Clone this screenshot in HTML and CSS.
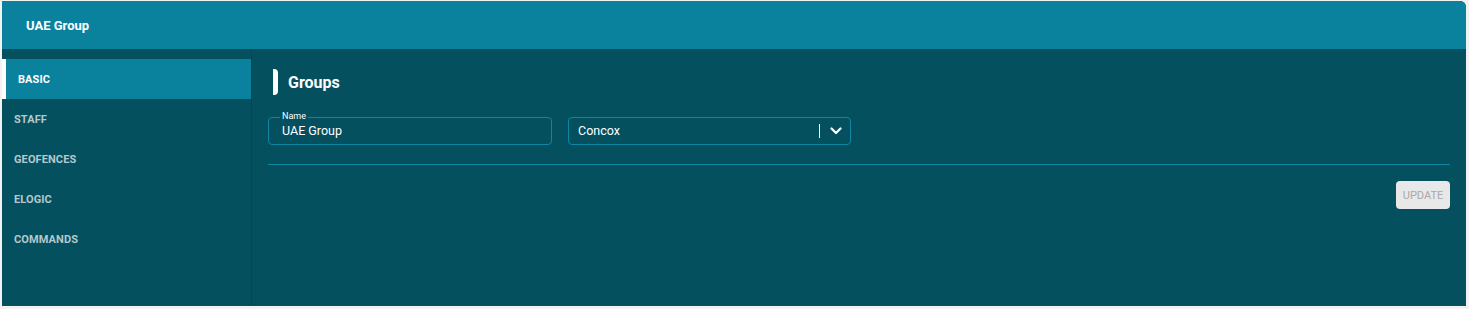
FILE: index.html
```html
<!DOCTYPE html>
<html lang="en">
<head>
    <meta charset="UTF-8">
    <meta name="viewport" content="width=device-width, initial-scale=1.0">
    <title>UAE Group</title>
    <link rel="stylesheet" href="styles.css">
</head>
<body>
    <div class="panel">
        <div class="panel-header">UAE Group</div>
        <div class="panel-body">
            <nav class="sidebar">
                <a class="nav-item active">BASIC</a>
                <a class="nav-item">STAFF</a>
                <a class="nav-item">GEOFENCES</a>
                <a class="nav-item">ELOGIC</a>
                <a class="nav-item">COMMANDS</a>
            </nav>
            <main class="content">
                <h2 class="section-title"><span class="title-mark"></span>Groups</h2>
                <div class="form-row">
                    <div class="field">
                        <label>Name</label>
                        <input type="text" value="UAE Group">
                    </div>
                    <div class="select">
                        <span class="select-value">Concox</span>
                        <span class="select-sep"></span>
                        <svg class="chevron" width="12" height="8" viewBox="0 0 12 8">
                            <path d="M1.5 1.5 L6 6 L10.5 1.5" fill="none" stroke="#fff" stroke-width="2.2" stroke-linecap="round" stroke-linejoin="round"/>
                        </svg>
                    </div>
                </div>
                <div class="divider"></div>
                <div class="actions">
                    <button disabled>UPDATE</button>
                </div>
            </main>
        </div>
    </div>
</body>
</html>
```

FILE: styles.css
```css
* {
    margin: 0;
    padding: 0;
    box-sizing: border-box;
}

body {
    font-family: Roboto, "Liberation Sans", sans-serif;
    background-color: #f2f2f2;
    padding: 1px 3px 3px 2px;
}

.panel {
    height: 305px;
    border-top-right-radius: 6px;
    overflow: hidden;
    background-color: #04505f;
    display: flex;
    flex-direction: column;
}

.panel-header {
    height: 48px;
    flex-shrink: 0;
    background-color: #0a829e;
    color: #fff;
    font-weight: 700;
    font-size: 13px;
    padding-left: 24px;
    display: flex;
    align-items: center;
}

.panel-body {
    flex: 1;
    display: flex;
}

.sidebar {
    width: 250px;
    border-right: 1px solid #03485a;
    padding-top: 10px;
    display: flex;
    flex-direction: column;
}

.nav-item {
    height: 40px;
    display: flex;
    align-items: center;
    padding-left: 12px;
    font-size: 11px;
    font-weight: 700;
    letter-spacing: 0.1px;
    color: #b3c9ce;
}

.nav-item.active {
    background-color: #0a829e;
    color: #fff;
    border-left: 4px solid #fff;
    width: 249px;
}

.content {
    flex: 1;
    padding: 19px 16px 0 16px;
}

.section-title {
    display: flex;
    align-items: center;
    gap: 10px;
    font-size: 16px;
    font-weight: 700;
    color: #fff;
    height: 28px;
    padding-left: 5px;
}

.title-mark {
    width: 5px;
    height: 26px;
    background-color: #fff;
    border-radius: 0 4px 4px 0;
}

.form-row {
    display: flex;
    gap: 16px;
    margin-top: 21px;
}

.field {
    position: relative;
    width: 284px;
}

.field label {
    position: absolute;
    left: 12px;
    top: -6px;
    font-size: 9px;
    line-height: 10px;
    color: #fff;
    background-color: #04505f;
    padding: 0 2px;
}

.field input {
    width: 100%;
    height: 28px;
    border: 1px solid #0d87a2;
    border-radius: 4px;
    background: transparent;
    color: #fff;
    font-family: inherit;
    font-size: 12.5px;
    padding: 0 13px 2px 13px;
    outline: none;
}

.select {
    width: 283px;
    height: 28px;
    border: 1px solid #0d87a2;
    border-radius: 4px;
    display: flex;
    align-items: center;
    padding-left: 9px;
    padding-bottom: 1px;
    color: #fff;
    font-size: 12.5px;
}

.select-value {
    flex: 1;
}

.select-sep {
    width: 1px;
    height: 14px;
    background-color: #fff;
    margin-right: 10px;
}

.chevron {
    margin-right: 8px;
}

.divider {
    height: 1px;
    background-color: #0d87a2;
    margin-top: 19px;
}

.actions {
    display: flex;
    justify-content: flex-end;
    margin-top: 16px;
}

button {
    width: 54px;
    height: 28px;
    background-color: #e8e8e8;
    color: #a9a9a9;
    border: none;
    border-radius: 4px;
    font-family: inherit;
    font-size: 11px;
}
```
